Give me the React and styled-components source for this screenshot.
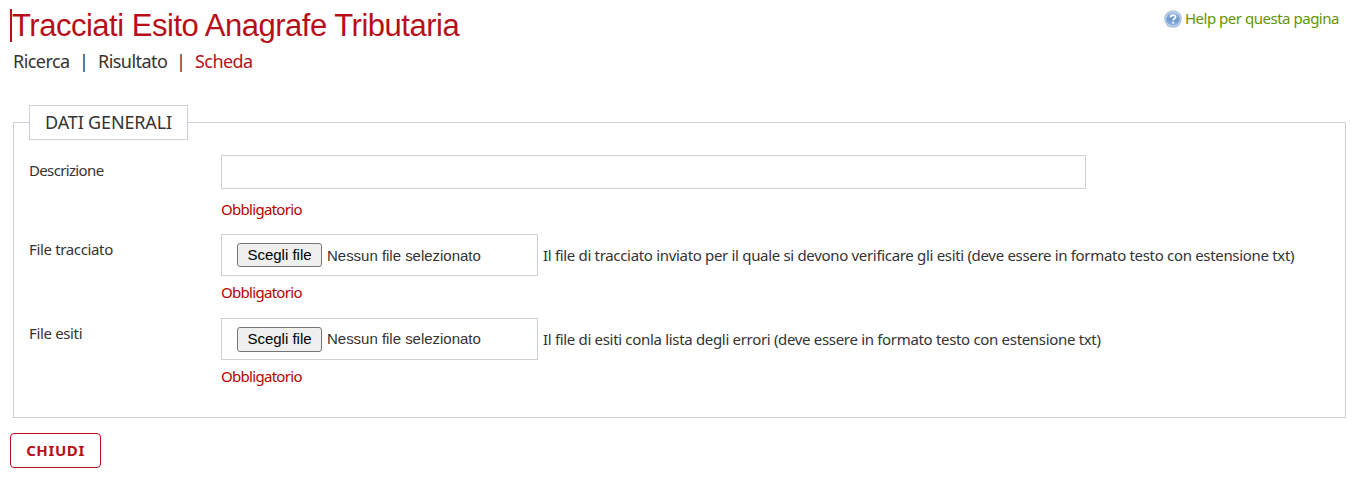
import React from "react";
import styled, { createGlobalStyle } from "styled-components";

const Global = createGlobalStyle`
  * { box-sizing: border-box; }
  body {
    margin: 0;
    background: #fff;
    color: #333;
    font-family: Tahoma, "Noto Sans", sans-serif;
    font-size: 15px;
  }
`;

const Page = styled.main`
  display: flex;
  flex-direction: column;
  align-items: stretch;
  height: 477px;
  padding: 9px 11px 0 10px;
`;

const Header = styled.header`
  display: flex;
  justify-content: space-between;
  align-items: flex-start;
  height: 33px;
`;

const Title = styled.h1`
  margin: 0;
  height: 33px;
  border-left: 2px solid #b70f19;
  font: 400 31px/33px Arial, "Liberation Sans", sans-serif;
  letter-spacing: -0.48px;
  color: #b70f19;
  white-space: nowrap;
`;

const HelpLink = styled.a`
  display: flex;
  align-items: center;
  gap: 3px;
  height: 20px;
  padding-right: 7px;
  line-height: 20px;
  letter-spacing: -0.48px;
  color: #629600;
  white-space: nowrap;
`;

const HelpText = styled.span`
  padding-bottom: 2px;
`;

const Tabs = styled.nav`
  display: flex;
  height: 40px;
  padding: 7px 0 0 3px;
  font-size: 18px;
  line-height: 24px;
`;

const Tab = styled.span`
  width: ${(p) => p.$width}px;
  color: ${(p) => (p.$active ? "#b70f19" : "#333")};
  letter-spacing: -0.55px;
  white-space: nowrap;
`;

const Separator = styled.span`
  width: 28px;
  text-align: center;
`;

const Fieldset = styled.fieldset`
  height: 313px;
  margin: 23px 0 0 3px;
  padding: 15px 15px 0;
  border: 1px solid #cfd1d8;
`;

const Legend = styled.legend`
  width: 159px;
  height: 35px;
  margin: 0 auto 0 0;
  padding: 0;
  border: 1px solid #cfd1d8;
  font-size: 18px;
  line-height: 33px;
  text-align: center;
  letter-spacing: -0.15px;
`;

const Row = styled.div`
  display: grid;
  grid-template-columns: 192px 1fr;
  height: ${(p) => p.$height}px;
`;

const Label = styled.label`
  padding-top: 5px;
  line-height: 20px;
  letter-spacing: ${(p) => p.$spacing}px;
`;

const Field = styled.div`
  display: flex;
  flex-direction: column;
`;

const TextInput = styled.input`
  width: 865px;
  height: 34px;
  padding: 0 15px;
  border: 1px solid #cfd1d8;
  outline: 0;
  font: inherit;
`;

const Control = styled.div`
  display: flex;
  align-items: center;
  gap: 5px;
`;

const FileBox = styled.div`
  display: flex;
  align-items: center;
  gap: 5px;
  flex: none;
  width: 317px;
  height: 42px;
  padding-left: 15px;
  border: 1px solid #cfd1d8;
  font: 15px/18px Arial, "Liberation Sans", sans-serif;
  white-space: nowrap;
`;

const FileName = styled.span`
  padding-top: ${(p) => p.$drop}px;
  letter-spacing: -0.02px;
`;

const FileButton = styled.button`
  width: 85px;
  height: ${(p) => p.$height}px;
  padding: 0;
  border: 1px solid #767676;
  border-radius: 3px;
  background: #efefef;
  color: #000;
  font: 15px/18px Arial, "Liberation Sans", sans-serif;
`;

const Hint = styled.span`
  padding-bottom: 1px;
  line-height: 20px;
  letter-spacing: -0.32px;
  white-space: nowrap;
`;

const Required = styled.span`
  margin-top: ${(p) => p.$top}px;
  line-height: 20px;
  letter-spacing: -0.7px;
  color: #b90000;
`;

const CloseButton = styled.button`
  width: 91px;
  height: 35px;
  margin-top: 15px;
  padding: 0 0 2px;
  border: 1px solid #b70f19;
  border-radius: 4px;
  background: #fff;
  color: #b70f19;
  font: 700 15px/20px Tahoma, "Noto Sans", sans-serif;
  letter-spacing: 0.6px;
`;

const HelpIcon = () => (
  <svg width="18" height="18" viewBox="0 0 18 18" aria-hidden="true">
    <defs>
      <linearGradient id="ball" x1="0" y1="0" x2="0" y2="1">
        <stop offset="0" stopColor="#a6c0e2" />
        <stop offset="0.5" stopColor="#6f98ca" />
        <stop offset="1" stopColor="#8fb8e4" />
      </linearGradient>
    </defs>
    <circle cx="9" cy="9" r="8.8" fill="#a9bfda" />
    <circle cx="9" cy="9" r="7.6" fill="#c9daee" />
    <circle cx="9" cy="9" r="6.8" fill="url(#ball)" />
    <path d="M6.7 7.2C6.7 4.4 11.5 4.4 11.5 7.1C11.5 8.8 9.1 8.7 9.1 10.5" fill="none" stroke="#fff" strokeWidth="1.7" />
    <circle cx="9.1" cy="12.7" r="1" fill="#fff" />
  </svg>
);

const FilePicker = ({ hint, buttonHeight = 24, drop = 0 }) => (
  <Control>
    <FileBox>
      <FileButton type="button" $height={buttonHeight}>Scegli file</FileButton>
      <FileName $drop={drop}>Nessun file selezionato</FileName>
    </FileBox>
    <Hint>{hint}</Hint>
  </Control>
);

export default function App() {
  return (
    <Page>
      <Global />
      <Header>
        <Title>Tracciati Esito Anagrafe Tributaria</Title>
        <HelpLink>
          <HelpIcon />
          <HelpText>Help per questa pagina</HelpText>
        </HelpLink>
      </Header>
      <Tabs>
        <Tab $width={57}>Ricerca</Tab>
        <Separator>|</Separator>
        <Tab $width={69}>Risultato</Tab>
        <Separator>|</Separator>
        <Tab $width={57} $active>Scheda</Tab>
      </Tabs>
      <Fieldset>
        <Legend>DATI GENERALI</Legend>
        <Row $height={79}>
          <Label $spacing={-0.65}>Descrizione</Label>
          <Field>
            <TextInput />
            <Required $top={10}>Obbligatorio</Required>
          </Field>
        </Row>
        <Row $height={84}>
          <Label $spacing={-0.35}>File tracciato</Label>
          <Field>
            <FilePicker
              drop={1}
              hint="Il file di tracciato inviato per il quale si devono verificare gli esiti (deve essere in formato testo con estensione txt)"
            />
            <Required $top={6}>Obbligatorio</Required>
          </Field>
        </Row>
        <Row $height={84}>
          <Label $spacing={-0.35}>File esiti</Label>
          <Field>
            <FilePicker
              buttonHeight={25}
              hint="Il file di esiti conla lista degli errori (deve essere in formato testo con estensione txt)"
            />
            <Required $top={6}>Obbligatorio</Required>
          </Field>
        </Row>
      </Fieldset>
      <CloseButton type="button">CHIUDI</CloseButton>
    </Page>
  );
}
